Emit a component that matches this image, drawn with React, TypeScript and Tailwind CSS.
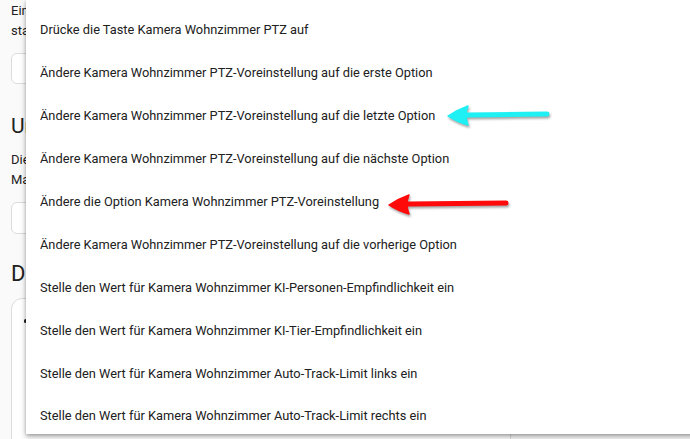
import React from 'react';

const items = [
  'Drücke die Taste Kamera Wohnzimmer PTZ auf',
  'Ändere Kamera Wohnzimmer PTZ-Voreinstellung auf die erste Option',
  'Ändere Kamera Wohnzimmer PTZ-Voreinstellung auf die letzte Option',
  'Ändere Kamera Wohnzimmer PTZ-Voreinstellung auf die nächste Option',
  'Ändere die Option Kamera Wohnzimmer PTZ-Voreinstellung',
  'Ändere Kamera Wohnzimmer PTZ-Voreinstellung auf die vorherige Option',
  'Stelle den Wert für Kamera Wohnzimmer KI-Personen-Empfindlichkeit ein',
  'Stelle den Wert für Kamera Wohnzimmer KI-Tier-Empfindlichkeit ein',
  'Stelle den Wert für Kamera Wohnzimmer Auto-Track-Limit links ein',
  'Stelle den Wert für Kamera Wohnzimmer Auto-Track-Limit rechts ein',
];

// hand-drawn annotation arrow pointing left
function Arrow({ color, length }: { color: string; length: number }) {
  return (
    <svg width={length + 8} height="28" viewBox={`0 0 ${length + 8} 28`} className="drop-shadow-[1px_2px_1px_rgba(0,0,0,0.35)]">
      <path d={`M20 13 L${length} 12`} stroke={color} strokeWidth="5" strokeLinecap="round" fill="none" />
      <path d="M1 14 Q10 8 21 4 Q17 13 21 23 Q10 20 1 14 Z" fill={color} stroke={color} strokeWidth="1.5" strokeLinejoin="round" />
    </svg>
  );
}

export default function App() {
  return (
    <div className="relative h-[439px] w-[690px] overflow-hidden bg-[#fafafa] font-['Roboto',sans-serif] text-[#212121]">
      {/* page behind the menu */}
      <div className="flex flex-col pl-[11px] pr-4">
        <p className="pt-[1px] text-[13px] leading-[20px]">
          Eine Automatisierung wird durch Auslöser ausgeführt.
          <br />
          starten die Verarbeitung einer Automatisierungsregel.
        </p>
        <div className="mt-[12px] h-[31px] w-[300px] rounded-[6px] border border-[#dcdcdc] bg-white" />
        <h2 className="mt-[28px] text-[21px] leading-[28px]">Und wenn</h2>
        <p className="mt-[10px] text-[13px] leading-[20px]">
          Die Bedingungen sind ein optionaler Teil einer Automatisierung.
          <br />
          Mache die Ausführung einer Automatisierung davon abhängig.
        </p>
        <div className="mt-[12px] h-[32px] w-[300px] rounded-[6px] border border-[#dcdcdc] bg-white" />
        <h2 className="mt-[26px] text-[22px] leading-[28px]">Dann tue</h2>
        <div className="mt-[10px] h-[200px] w-[500px] rounded-[11px] border border-[#dcdcdc] bg-white pl-[12px] pt-[20px]">
          <div className="h-[4px] w-[3px] rounded-full bg-[#212121]" />
        </div>
      </div>

      {/* dropdown menu */}
      <div className="absolute left-[26px] top-0 w-[700px] bg-white pt-[5px] shadow-[0_3px_6px_rgba(0,0,0,0.28),0_1px_3px_rgba(0,0,0,0.2)]">
        {items.map((t) => (
          <div key={t} className="flex h-[42.9px] items-center pl-[14px] pt-[8px] text-[12.8px] leading-[20px] text-[#212121]">
            {t}
          </div>
        ))}
      </div>

      {/* annotation arrows */}
      <div className="absolute left-[447px] top-[102px]">
        <Arrow color="#1ef0f4" length={100} />
      </div>
      <div className="absolute left-[388px] top-[191px]">
        <Arrow color="#ff0a0a" length={118} />
      </div>
    </div>
  );
}
